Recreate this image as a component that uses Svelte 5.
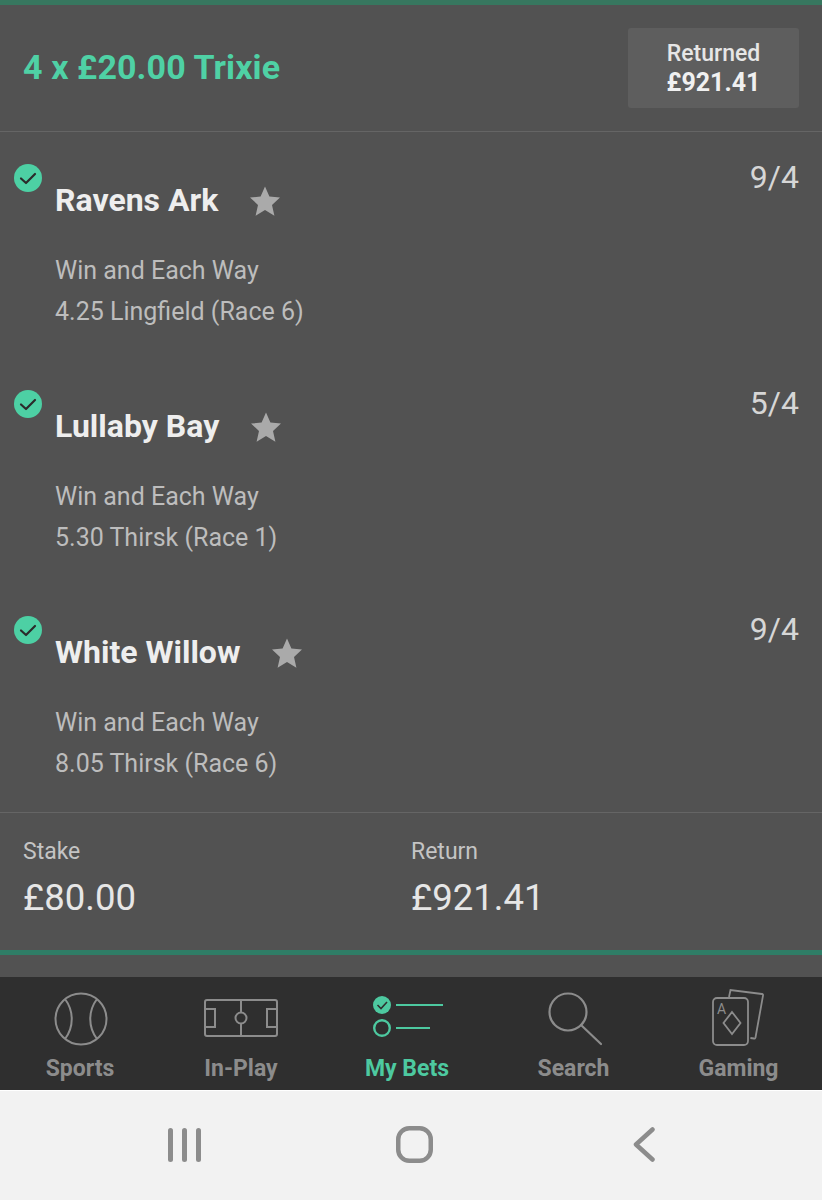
<script>
  const selections = [
    { name: 'Ravens Ark', odds: '9/4', meeting: '4.25 Lingfield (Race 6)' },
    { name: 'Lullaby Bay', odds: '5/4', meeting: '5.30 Thirsk (Race 1)' },
    { name: 'White Willow', odds: '9/4', meeting: '8.05 Thirsk (Race 6)' }
  ];
</script>

<div class="page">
  <main class="bet">
    <header class="head">
      <h1>4 x £20.00 Trixie</h1>
      <div class="returned"><span>Returned</span><strong>£921.41</strong></div>
    </header>

    <section class="list">
      {#each selections as s}
        <article class="sel">
          <svg class="check" viewBox="0 0 28 28" aria-hidden="true">
            <circle cx="14" cy="14" r="14" fill="#4dd0a4" />
            <path d="M7 14.5l5 4.5 9-9" fill="none" stroke="#2b2b2b" stroke-width="2.2" stroke-linecap="round" stroke-linejoin="round" />
          </svg>
          <div class="info">
            <div class="name">
              <h2>{s.name}</h2>
              <svg class="star" viewBox="0 0 30 30" aria-hidden="true">
                <path d="M15 0.5l4.4 10.1 10.6 1-8 7.300 2.400 10.800L15 24.100 5.600 29.700 8 18.900 0 11.600l10.600-1z" fill="#aaaaaa" />
              </svg>
            </div>
            <p class="sub first">Win and Each Way</p>
            <p class="sub">{s.meeting}</p>
          </div>
          <div class="odds">{s.odds}</div>
        </article>
      {/each}
    </section>

    <footer class="totals">
      <div class="col stake"><span>Stake</span><b>£80.00</b></div>
      <div class="col"><span>Return</span><b>£921.41</b></div>
    </footer>
  </main>

  <nav class="tabs">
    <div class="tab t1">
      <svg width="54" height="54" viewBox="0 0 54 54" fill="none" stroke="#8c8c8c" stroke-width="2">
        <circle cx="27" cy="27" r="25.500" />
        <path d="M11 7c9 12 9 28 0 40M43 7c-9 12-9 28 0 40" />
      </svg>
      <span>Sports</span>
    </div>
    <div class="tab t2">
      <svg width="74" height="38" viewBox="0 0 74 38" fill="none" stroke="#8c8c8c" stroke-width="2">
        <rect x="1" y="1" width="72" height="36" rx="2" />
        <path d="M37 1v36M1 10h10v18H1M73 10H63v18h10" />
        <circle cx="37" cy="19" r="5.500" fill="#2f2f2f" />
      </svg>
      <span>In-Play</span>
    </div>
    <div class="tab t3 active">
      <svg width="72" height="46" viewBox="0 0 72 46" fill="none" stroke="#4dc9a0" stroke-width="2">
        <circle cx="10" cy="11" r="9" fill="#4dc9a0" stroke="none" />
        <path d="M5.500 11l3.500 3.500 6-6.500" stroke="#2f2f2f" stroke-width="1.600" />
        <circle cx="10" cy="34" r="7.800" stroke-width="2.400" />
        <path d="M24 11h47M24 34h34" />
      </svg>
      <span>My Bets</span>
    </div>
    <div class="tab t4">
      <svg width="54" height="54" viewBox="0 0 54 54" fill="none" stroke="#8c8c8c" stroke-width="2.200">
        <circle cx="20" cy="20" r="18.500" />
        <path d="M33 33l20 19" stroke-linecap="round" />
      </svg>
      <span>Search</span>
    </div>
    <div class="tab t5">
      <svg width="52" height="58" viewBox="0 0 52 58" fill="none" stroke="#8c8c8c" stroke-width="1.800">
        <path d="M17 9l1.500-7L50 6c.8.100 1.200.800 1 1.600L43.500 49.500c-.200.800-.800 1.200-1.600 1l-3.500-.500" />
        <rect x="1" y="10" width="35" height="47" rx="4" />
        <path d="M20 24l8.500 11L20 46l-8.500-11z" />
        <text x="5" y="26" font-family="Roboto, sans-serif" font-size="14" fill="#8c8c8c" stroke="none">A</text>
      </svg>
      <span>Gaming</span>
    </div>
  </nav>

  <div class="system">
    <svg class="recent" width="33" height="34" viewBox="0 0 33 34" fill="#8c8c8c">
      <rect x="0" y="0" width="5" height="34" rx="2.500" />
      <rect x="14" y="0" width="5" height="34" rx="2.500" />
      <rect x="28" y="0" width="5" height="34" rx="2.500" />
    </svg>
    <svg class="home" width="37" height="37" viewBox="0 0 37 37" fill="none" stroke="#8c8c8c" stroke-width="4.500">
      <rect x="2.250" y="2.250" width="32.500" height="32.500" rx="11" />
    </svg>
    <svg class="back" width="22" height="35" viewBox="0 0 22 35" fill="none" stroke="#8c8c8c" stroke-width="4.500" stroke-linecap="round" stroke-linejoin="round">
      <path d="M19.500 2.500L3 17.500l16.500 15" />
    </svg>
  </div>
</div>

<style>
  :global(body) {
    margin: 0;
    background: #525252;
  }
  .page {
    width: 822px;
    height: 1200px;
    display: flex;
    flex-direction: column;
    font-family: Roboto, "Liberation Sans", sans-serif;
    overflow: hidden;
  }
  .bet {
    height: 977px;
    box-sizing: border-box;
    background: #525252;
    border-top: 5px solid #37775f;
  }
  .head {
    height: 127px;
    box-sizing: border-box;
    border-bottom: 1px solid #656565;
    padding: 0 23px;
    display: flex;
    align-items: center;
    justify-content: space-between;
  }
  h1 {
    margin: 0 0 2px;
    font-size: 34px;
    letter-spacing: 0.1px;
    font-weight: 700;
    color: #4fd1a5;
  }
  .returned {
    width: 171px;
    height: 80px;
    background: #5e5e5e;
    border-radius: 3px;
    display: flex;
    flex-direction: column;
    align-items: center;
    justify-content: center;
    color: #e6e6e6;
    font-size: 23px;
    line-height: 29px;
  }
  .returned span {
    font-weight: 500;
  }
  .returned strong {
    font-weight: 700;
    font-size: 25px;
    color: #f0f0f0;
  }
  .list {
    height: 681px;
    box-sizing: border-box;
    border-bottom: 1px solid #656565;
  }
  .sel {
    height: 226px;
    box-sizing: border-box;
    padding: 32px 23px 0 14px;
    display: flex;
    align-items: flex-start;
  }
  .check {
    width: 28px;
    height: 28px;
    flex: none;
    margin-right: 13px;
  }
  .info {
    flex: 1;
    padding-top: 18px;
  }
  .name {
    display: flex;
    align-items: center;
    height: 36px;
    margin-bottom: 32px;
  }
  h2 {
    margin: 0;
    font-size: 32px;
    font-weight: 700;
    color: #eeeeee;
  }
  .star {
    width: 30px;
    height: 30px;
    margin: 1px 0 0 32px;
  }
  .sub {
    margin: 0;
    font-size: 25px;
    line-height: 41px;
    color: #bdbdbd;
  }
  .odds {
    font-size: 32px;
    line-height: 26px;
    color: #d6d6d6;
  }
  .totals {
    height: 142px;
    box-sizing: border-box;
    padding: 25px 0 0 23px;
    display: flex;
    border-bottom: 5px solid #2f7d66;
  }
  .col {
    display: flex;
    flex-direction: column;
  }
  .stake {
    width: 388px;
  }
  .col span {
    font-size: 23px;
    line-height: 28px;
    color: #c4c4c4;
  }
  .col b {
    margin-top: 10px;
    font-size: 36.5px;
    line-height: 44px;
    font-weight: 400;
    color: #e6e6e6;
  }
  .tabs {
    height: 113px;
    background: #2f2f2f;
    display: flex;
    flex: none;
  }
  .tab {
    display: flex;
    flex-direction: column;
    align-items: center;
    justify-content: flex-end;
    padding-bottom: 7px;
    box-sizing: border-box;
    color: #8c8c8c;
  }
  .tab span {
    font-size: 23px;
    line-height: 28px;
    font-weight: 700;
  }
  .t1 { width: 160px; }
  .t2 { width: 162px; }
  .t3 { width: 170px; }
  .t4 { width: 163px; }
  .t5 { width: 167px; }
  .t1 svg { margin-bottom: 9px; margin-left: 2px; }
  .t2 svg { margin-bottom: 18px; }
  .t3 svg { margin-bottom: 15px; margin-left: 2px; }
  .t4 svg { margin-bottom: 9px; margin-left: 2px; }
  .t5 svg { margin-bottom: 9px; margin-left: -2px; }
  .active {
    color: #4dc9a0;
  }
  .system {
    flex: 1;
    background: #f2f2f2;
    border-top: 1px solid #ffffff;
    display: flex;
    align-items: center;
    padding-left: 168px;
    padding-bottom: 2px;
  }
  .home {
    margin-left: 195px;
  }
  .back {
    margin-left: 200px;
  }
</style>
